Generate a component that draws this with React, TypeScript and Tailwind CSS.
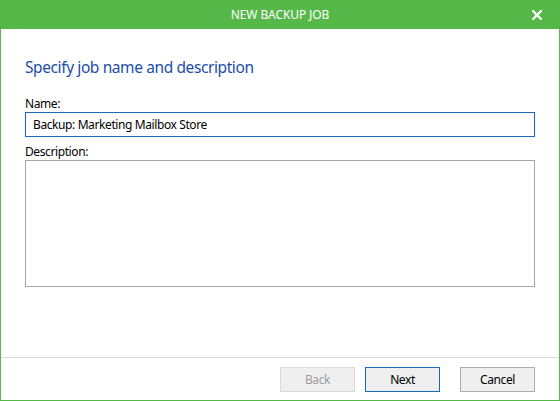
export default function App() {
  return (
    <div
      className="w-[560px] h-[401px] flex flex-col bg-white border-x border-b border-[#57b84a] text-[12px] tracking-[-0.4px] text-black"
      style={{ fontFamily: '"Noto Sans", "Open Sans", sans-serif' }}
    >
      {/* title bar */}
      <div className="h-[29px] shrink-0 bg-[#57b84a] grid grid-cols-[1fr_auto_1fr] items-center">
        <div />
        <div className="text-white text-[12px] leading-none tracking-[-0.1px]">NEW BACKUP JOB</div>
        <div className="flex justify-end pr-[17px]">
          <button className="w-[10px] h-[10px] flex items-center justify-center" aria-label="Close">
            <svg width="10" height="10" viewBox="0 0 10 10">
              <path d="M1 1 L9 9 M9 1 L1 9" stroke="#ffffff" strokeWidth="2.2" strokeLinecap="square" />
            </svg>
          </button>
        </div>
      </div>

      {/* body */}
      <div className="flex-1 flex flex-col px-[24px] pt-[27px]">
        <h1 className="text-[15.5px] leading-[22px] tracking-[-0.4px] text-[#1b4dac] font-normal">
          Specify job name and description
        </h1>

        <label className="block mt-[18px] leading-[16px]">Name:</label>
        <input
          defaultValue="Backup: Marketing Mailbox Store"
          className="h-[25px] w-full border border-[#1a6bbb] px-[7px] outline-none text-[12px] tracking-[-0.4px]"
        />

        <label className="block mt-[7px] leading-[16px]">Description:</label>
        <textarea className="h-[127px] w-full border border-[#a6a6a6] resize-none outline-none px-[7px] py-[4px]" />
      </div>

      {/* footer */}
      <div className="h-[43px] shrink-0 border-t border-[#d9d9d9] flex items-start justify-end pt-[9px] pr-[24px]">
        <button
          disabled
          className="w-[75px] h-[25px] bg-[#efefef] border border-[#d9d9d9] text-[#9c9c9c]"
        >
          Back
        </button>
        <button className="w-[75px] h-[25px] ml-[10px] bg-[#efefef] border border-[#1a6bbb]">
          Next
        </button>
        <button className="w-[75px] h-[25px] ml-[20px] bg-[#efefef] border border-[#adadad]">
          Cancel
        </button>
      </div>
    </div>
  )
}
